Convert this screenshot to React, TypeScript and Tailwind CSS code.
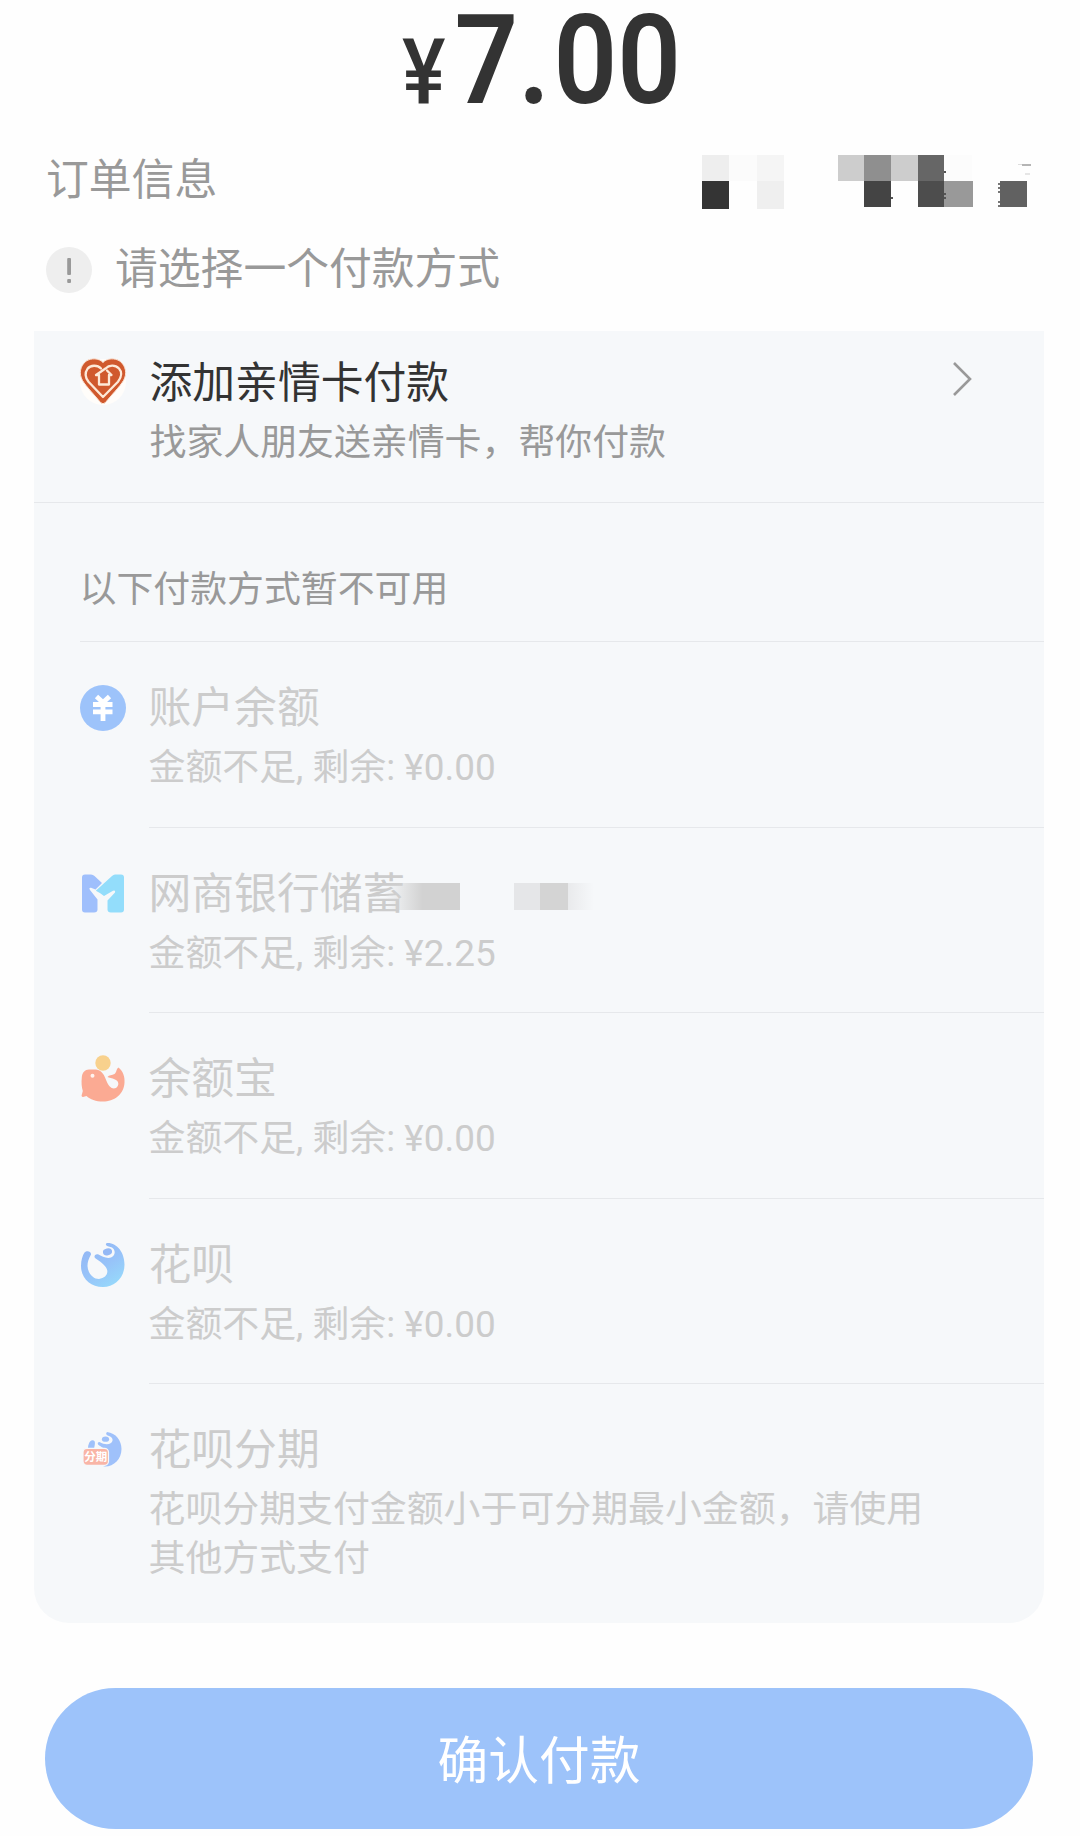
import { ReactNode } from "react";

interface PayMethod {
  id: string;
  name: string;
  note: string;
  icon: ReactNode;
  masked?: boolean;
}

const FamilyCardIcon = () => (
  <svg className="block w-[48px] h-[50px]" viewBox="0 0 48 50" fill="none">
    <circle cx="24" cy="25" r="23" fill="#fffdfa" />
    <path
      d="M24 5.5C28 1 36 .8 41 4.2 47 8.800 48.300 17 44.500 23.500 41 29.500 32 38.500 26.500 45.500Q24 48 21.500 45.500C16 38.500 7 29.500 3.500 23.500-.3 17 1 8.800 7 4.200 12 .8 20 1 24 5.500Z"
      fill="#d0592d"
      stroke="#fbe3d3"
      strokeWidth="1"
    />
    <path
      d="M22 11.500C18.500 7.800 11.500 7.800 8.500 11.800 5.500 16 6.300 20.500 9.500 24.800L24 40 39 24.800C42.500 20 43.200 15 40 11.500 36 7.400 30 8 26.500 11.500L17 18H20V27.500H30V18H32.500L28 13.500"
      stroke="#fde9d8"
      strokeWidth="2.300"
      strokeLinejoin="round"
      strokeLinecap="round"
    />
  </svg>
);

const BalanceIcon = () => (
  <svg className="block w-[48px] h-[48px]" viewBox="0 0 48 48" fill="none">
    <circle cx="24" cy="24" r="23" fill="#9dc3fa" />
    <path
      d="M17.500 12.500L24 18.500 30.500 12.500M14 20.500H33.500M14 27.800H33.500M24 19V37"
      stroke="#fff"
      strokeWidth="4.800"
    />
  </svg>
);

const BankIcon = () => (
  <svg className="block w-[48px] h-[48px]" viewBox="0 0 48 48" fill="none">
    <path
      d="M6 4.500H12Q14 4.500 15.500 6L23 13 16.500 19.500 12 17.800Q9.500 17.500 11 20L18.500 29.500V39.500Q18.500 42.500 15 42.500H6Q3 42.500 3 39.500V7.500Q3 4.500 6 4.500Z"
      fill="#9fbffc"
    />
    <path
      d="M36 4.500H42Q45 4.500 45 7.500V39.500Q45 42.500 42 42.500H32Q28.500 42.500 28.500 39.500V30.500L36 22.500Q36.800 20 34 20.800L25 26Q20.500 22.500 16.800 20.800L33 6Q34.500 4.500 36 4.500Z"
      fill="#93ddfb"
    />
  </svg>
);

const YuebaoIcon = () => (
  <svg className="block w-[48px] h-[48px]" viewBox="0 0 48 48" fill="none">
    <circle cx="24" cy="8" r="7.700" fill="#f8d18d" />
    <path
      d="M10 14.500H17C23 15 25.500 20.500 27.500 26 30 32 33 34.500 37 33 40.500 30.500 40 26 36 24.500 33 23 30 23 28.500 22 30 20 33 20.200 35.500 19 38 17 37 14 39.500 12.500 44 16 46 22 45.500 27.500 45 39.500 35 46.500 24 46.500 17 46.500 11 44.500 7.500 41L4 42Q1.800 41.500 3 39L3.800 36C2.500 31.500 2.300 27.500 2.800 22.500 3 17.500 6 14.500 10 14.500Z"
      fill="#fbaa93"
    />
    <circle cx="13.500" cy="20.700" r="2" fill="#fff3ee" />
  </svg>
);

const HuabeiIcon = () => (
  <svg className="block w-[48px] h-[48px]" viewBox="0 0 48 48" fill="none">
    <defs>
      <linearGradient id="huabei" x1="10" y1="6" x2="36" y2="46" gradientUnits="userSpaceOnUse">
        <stop offset="0" stopColor="#93b8f5" />
        <stop offset="0.5" stopColor="#97c3f9" />
        <stop offset="1" stopColor="#96dafb" />
      </linearGradient>
    </defs>
    <path
      d="M28 2C38 1.500 45.500 11.500 45.500 23.500 45.500 36.500 36 46 24 46 11 46 2 37 2 25 2 19 3.500 14.500 5.500 11.500 8 9 12.500 10.500 12 13.500 9.500 18 8.500 21 8.500 25 9 33 14.500 38 20 38 26 37.500 29.500 33 28 28.500 26.500 24 20.500 20 16 17 14.500 15 16.500 12.500 19 13.300 23 15.500 28 18 32 16.500 37 14.500 36.500 8.500 33 6.500 31 5.500 28 5.500 27 4Q26.500 2.500 28 2Z"
      fill="url(#huabei)"
    />
    <ellipse cx="28.500" cy="10.800" rx="4.600" ry="3.500" transform="rotate(-12 28.500 10.800)" fill="#93b8f5" />
  </svg>
);

const InstalmentIcon = () => (
  <svg className="block w-[48px] h-[48px]" viewBox="0 0 48 48" fill="none">
    <path
      d="M28 6C37 7 42.500 14.500 42.500 23 42.500 33 35 40.500 26 40.500L20 39V26H29C27 23 22 21 19 18.500Q18 16 20.500 16C25 18.500 29 19 32 17 35 14.500 33.500 11 30 10Q25.500 8.500 28 6Z"
      fill="#9fc1fa"
    />
    <ellipse cx="26.500" cy="13.200" rx="3.600" ry="2.600" fill="#9fc1fa" />
    <path d="M9 23C9 18 11 14 13.500 14.200 17 14.500 16 18 15 23Z" fill="#9fc1fa" />
    <rect x="4" y="22.300" width="25.500" height="17" rx="4" fill="#f9b5a6" stroke="#f6f8fa" strokeWidth="1.200" />
    <text x="16.700" y="35" textAnchor="middle" fontSize="11.500" fontWeight="700" fill="#fff" fontFamily="Noto Sans CJK SC">
      分期
    </text>
  </svg>
);

const methods: PayMethod[] = [
  { id: "balance", name: "账户余额", note: "金额不足, 剩余: ¥0.00", icon: <BalanceIcon /> },
  { id: "mybank", name: "网商银行储蓄", note: "金额不足, 剩余: ¥2.25", icon: <BankIcon />, masked: true },
  { id: "yuebao", name: "余额宝", note: "金额不足, 剩余: ¥0.00", icon: <YuebaoIcon /> },
  { id: "huabei", name: "花呗", note: "金额不足, 剩余: ¥0.00", icon: <HuabeiIcon /> },
  {
    id: "instalment",
    name: "花呗分期",
    note: "花呗分期支付金额小于可分期最小金额，请使用其他方式支付",
    icon: <InstalmentIcon />,
  },
];

// Pixelated blocks that hide the order details
const OrderMosaic = () => (
  <svg className="block w-[332px] h-[56px]" viewBox="700 153 332 56" shapeRendering="crispEdges">
    <rect x="702" y="155" width="27" height="26" fill="#eeeeee" />
    <rect x="729" y="155" width="28" height="26" fill="#fbfbfb" />
    <rect x="757" y="155" width="27" height="26" fill="#f5f5f5" />
    <rect x="702" y="181" width="27" height="28" fill="#343434" />
    <rect x="757" y="181" width="27" height="28" fill="#efefef" />
    <rect x="838" y="155" width="26" height="26" fill="#cdcdcd" />
    <rect x="864" y="155" width="27" height="26" fill="#8f8f8f" />
    <rect x="891" y="155" width="27" height="26" fill="#cdcdcd" />
    <rect x="918" y="155" width="26" height="26" fill="#666666" />
    <rect x="944" y="155" width="28" height="26" fill="#fcfcfc" />
    <rect x="864" y="181" width="27" height="26" fill="#444444" />
    <rect x="918" y="181" width="26" height="26" fill="#4d4d4d" />
    <rect x="944" y="181" width="29" height="26" fill="#999999" />
    <rect x="1000" y="181" width="27" height="26" fill="#616161" />
    <path d="M944 171h2v2h-2zM944 193h2v2h-2zM944 197h2v2h-2zM891 197h2v2h-2z" fill="#555555" />
    <path d="M998 183h2v2h-2zM998 187h2v2h-2zM998 191h2v2h-2zM998 201h2v2h-2zM998 205h2v2h-2z" fill="#777777" />
    <rect x="1018" y="164" width="6" height="1" fill="#dddddd" />
    <rect x="1022" y="164" width="9" height="2" fill="#b5b5b5" />
    <rect x="1025" y="173" width="5" height="2" fill="#e6e6e6" />
  </svg>
);

const MethodRow = ({ method, last }: { method: PayMethod; last: boolean }) => (
  <li className="flex pl-[45px]">
    <div className="w-[70px] shrink-0 pt-[42px]">{method.icon}</div>
    <div
      className={`flex-1 pt-[36px] text-[#cccccc] ${
        last ? "h-[238px]" : "h-[185.5px] border-b border-[#e6e8eb]"
      }`}
    >
      <div className="relative">
        <h3 className="text-[42.8px] leading-[60px]">{method.name}</h3>
        {method.masked && (
          <div className="absolute left-[236px] top-[19px] flex h-[27px]">
            <div className="w-[75px] bg-linear-to-r from-[#d2d2d2]/0 via-[#d2d2d2] via-50% to-[#d2d2d2]" />
            <div className="ml-[54px] w-[26px] bg-[#e5e6e8]" />
            <div className="w-[28px] bg-[#d4d4d4]" />
            <div className="w-[26px] bg-linear-to-r from-[#e9eaec] to-[#f6f8fa]" />
          </div>
        )}
      </div>
      <p className="w-[790px] text-[36.9px] leading-[49px] mt-[5px]">{method.note}</p>
    </div>
  </li>
);

export default function App() {
  return (
    <main className="w-[1080px] h-[1836px] overflow-hidden bg-[#fefefe] font-[Roboto,'Noto_Sans_CJK_SC',sans-serif] text-[#999999]">
      <div className="h-[150px] flex justify-center text-[#333333]">
        <div className="w-[276px] flex items-baseline leading-[122px]">
          <span className="block w-[59px] text-[91px] font-medium origin-left scale-x-[0.9]">¥</span>
          <span className="block text-[124px] font-semibold origin-left scale-x-[0.9] whitespace-nowrap">
            <span className="ml-[5px]">7</span>
            <span className="mr-[4px]">.</span>00
          </span>
        </div>
      </div>

      <div className="flex items-start justify-between h-[92px] pl-[46px] pr-[48px]">
        <span className="text-[42.8px] leading-[60px]">订单信息</span>
        <div className="pt-[3px]">
          <OrderMosaic />
        </div>
      </div>

      <div className="flex items-start h-[89px] pl-[46px]">
        <svg className="block mt-[5px] w-[46px] h-[46px]" viewBox="0 0 46 46">
          <circle cx="23" cy="23" r="23" fill="#eeeeee" />
          <rect x="21.200" y="11" width="3.800" height="17" rx="1" fill="#999999" />
          <rect x="21.200" y="32" width="3.800" height="4" rx="1" fill="#999999" />
        </svg>
        <span className="-mt-[3px] ml-[23px] text-[42.8px] leading-[60px]">请选择一个付款方式</span>
      </div>

      <section className="ml-[33.5px] w-[1010px] h-[1292px] rounded-b-[35px] bg-[#f6f8fa]">
        <div className="flex items-start h-[172px] pl-[45px] pr-[71px] border-b border-[#e6e8eb]">
          <div className="w-[71px] shrink-0 pt-[26px]">
            <FamilyCardIcon />
          </div>
          <div className="flex-1 pt-[22px]">
            <h2 className="text-[42.8px] leading-[60px] text-[#333333]">添加亲情卡付款</h2>
            <p className="mt-[5px] text-[36.9px] leading-[49px]">找家人朋友送亲情卡，帮你付款</p>
          </div>
          <svg className="block mt-[30px] w-[22px] h-[36px]" viewBox="0 0 22 36" fill="none">
            <path d="M3 2L19 18 3 34" stroke="#999999" strokeWidth="2.600" />
          </svg>
        </div>

        <div className="ml-[46px] h-[139px] pt-[62px] border-b border-[#e6e8eb] text-[36.9px] leading-[49px]">
          以下付款方式暂不可用
        </div>

        <ul>
          {methods.map((method, i) => (
            <MethodRow key={method.id} method={method} last={i === methods.length - 1} />
          ))}
        </ul>
      </section>

      <button className="block ml-[45px] mt-[65px] w-[988px] h-[141px] pt-[6px] rounded-full bg-[#9dc3fa] text-white text-[50.7px] leading-[135px]">
        确认付款
      </button>
    </main>
  );
}
